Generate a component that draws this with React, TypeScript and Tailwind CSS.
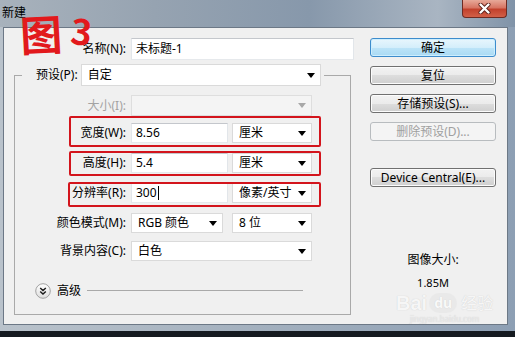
import React from "react";

function Arrow({ disabled }: { disabled?: boolean }) {
  return (
    <svg width="8" height="5" viewBox="0 0 8 5" className="shrink-0">
      <path d="M0 0H8L4 5Z" fill={disabled ? "#a8a8a8" : "#000"} />
    </svg>
  );
}

function Select({ w, h, text, disabled }: { w: string; h: string; text?: string; disabled?: boolean }) {
  return (
    <div
      className={`${w} ${h} ${disabled ? "bg-[#f4f4f4] border-[#dedede]" : "bg-white border-[#dadada]"} border flex items-center justify-between pl-[6px] pr-[5px] shrink-0`}
    >
      <span className="leading-[16px] whitespace-nowrap">{text}</span>
      <Arrow disabled={disabled} />
    </div>
  );
}

function Input({ w, h, children }: { w: string; h: string; children?: React.ReactNode }) {
  return (
    <div className={`${w} ${h} bg-white border border-t-[#c4c7cc] border-x-[#e2e6ea] border-b-[#e6e9ec] flex items-center pl-[4px] shrink-0`}>
      <span className="leading-[16px] whitespace-nowrap flex items-center">{children}</span>
    </div>
  );
}

function Label({ children, disabled }: { children: React.ReactNode; disabled?: boolean }) {
  return (
    <span className={`w-[111px] text-right leading-[16px] whitespace-nowrap shrink-0 ${disabled ? "text-[#a3a3a3]" : "text-black"}`}>
      {children}
    </span>
  );
}

function Btn({ children, kind, className }: { children: React.ReactNode; kind?: "default" | "disabled"; className?: string }) {
  const base = "w-[126px] h-[19px] rounded-[3px] border flex items-center justify-center leading-[16px] whitespace-nowrap";
  if (kind === "default")
    return (
      <div className={`${base} ${className ?? ""} border-[#3d8ccc] bg-[linear-gradient(#e8f6fd,#d4eefb_50%,#bde4f8_50%,#a9daf4)] shadow-[inset_0_0_0_1px_#cdeefe] text-black`}>
        {children}
      </div>
    );
  if (kind === "disabled")
    return (
      <div className={`${base} ${className ?? ""} border-[#b8bcbf] bg-[#f4f4f4] text-[#a0a0a0]`}>{children}</div>
    );
  return (
    <div className={`${base} ${className ?? ""} border-[#707070] bg-[linear-gradient(#f2f2f2,#ebebeb_50%,#dddddd_50%,#cfcfcf)] shadow-[inset_0_0_0_1px_#fcfcfc] text-black`}>
      {children}
    </div>
  );
}

export default function App() {
  return (
    <div className="w-[515px] h-[337px] relative overflow-hidden flex flex-col bg-[linear-gradient(to_right,#b9c2cb,#a3b0be_50%,#8d9fb4)] font-['Noto_Sans','Noto_Sans_CJK_SC',sans-serif] text-[12px] text-black">
      {/* title bar */}
      <div className="h-[27px] shrink-0 flex items-start justify-between bg-[linear-gradient(to_right,#a8b2bc,#96a3b1_30%,#8798ab_60%,#a9b5c2_85%,#8093a8)]">
        <span className="mt-[5px] ml-[2px] leading-[16px] text-black">新建</span>
        <div className="mr-[8px] w-[45px] h-[18px] rounded-b-[4px] border border-t-0 border-[#6e2b22] bg-[linear-gradient(#e7a999,#d77563_45%,#c2412c_55%,#d26048)] flex items-center justify-center">
          <svg width="13" height="11" viewBox="0 0 13 11">
            <path d="M2.5 1.5L10.5 9.5M10.5 1.5L2.5 9.5" stroke="#5a1f18" strokeWidth="4" strokeLinecap="round" />
            <path d="M2.5 1.5L10.5 9.5M10.5 1.5L2.5 9.5" stroke="#fff" strokeWidth="2.4" strokeLinecap="round" />
          </svg>
        </div>
      </div>

      {/* window body */}
      <div className="flex-1 flex pl-[3px] pr-[7px] pb-[6px]">
        <div className="flex-1 border border-[#6c7886] bg-[#f0f0f0] flex">
          {/* left column */}
          <div className="ml-[10px] w-[340px] flex flex-col">
            <div className="mt-[10px] h-[22px] flex items-center">
              <span className="w-[112px] text-right leading-[16px] whitespace-nowrap shrink-0">名称(N):</span>
              <div className="ml-[5px]">
                <Input w="w-[223px]" h="h-[22px]">未标题-1</Input>
              </div>
            </div>

            <fieldset className="mt-[4px] w-[337px] border border-[#a9a9a9] pb-[15px]">
              <legend className="ml-[7px] pl-[14px] pr-[3px]">
                <div className="flex items-center h-[22px]">
                  <span className="leading-[16px] whitespace-nowrap">预设(P):</span>
                  <div className="ml-[3px]">
                    <Select w="w-[240px]" h="h-[22px]" text="自定" />
                  </div>
                </div>
              </legend>

              <div className="mt-[9px] h-[21px] flex items-center">
                <Label disabled>大小(I):</Label>
                <div className="ml-[5px]">
                  <Select w="w-[181px]" h="h-[21px]" disabled />
                </div>
              </div>

              <div className="mt-[7px] h-[20px] flex items-center">
                <Label>宽度(W):</Label>
                <div className="ml-[5px] flex gap-[4px]">
                  <Input w="w-[97px]" h="h-[20px]">8.56</Input>
                  <Select w="w-[80px]" h="h-[20px]" text="厘米" />
                </div>
              </div>

              <div className="mt-[10px] h-[20px] flex items-center">
                <Label>高度(H):</Label>
                <div className="ml-[5px] flex gap-[4px]">
                  <Input w="w-[97px]" h="h-[20px]">5.4</Input>
                  <Select w="w-[80px]" h="h-[20px]" text="厘米" />
                </div>
              </div>

              <div className="mt-[10px] h-[20px] flex items-center">
                <Label>分辨率(R):</Label>
                <div className="ml-[5px] flex gap-[4px]">
                  <Input w="w-[97px]" h="h-[20px]">
                    300<span className="inline-block w-[1px] h-[14px] bg-black ml-[1px]" />
                  </Input>
                  <Select w="w-[80px]" h="h-[20px]" text="像素/英寸" />
                </div>
              </div>

              <div className="mt-[10px] h-[20px] flex items-center">
                <Label>颜色模式(M):</Label>
                <div className="ml-[5px] flex gap-[9px]">
                  <Select w="w-[92px]" h="h-[20px]" text="RGB 颜色" />
                  <Select w="w-[80px]" h="h-[20px]" text="8 位" />
                </div>
              </div>

              <div className="mt-[8px] h-[20px] flex items-center">
                <Label>背景内容(C):</Label>
                <div className="ml-[5px]">
                  <Select w="w-[181px]" h="h-[20px]" text="白色" />
                </div>
              </div>

              <div className="mt-[22px] h-[16px] flex items-center pl-[20px] mr-[47px]">
                <svg width="16" height="16" viewBox="0 0 16 16" className="shrink-0">
                  <defs>
                    <linearGradient id="cg" x1="0" y1="0" x2="0" y2="1">
                      <stop offset="0" stopColor="#ffffff" />
                      <stop offset="1" stopColor="#dedede" />
                    </linearGradient>
                  </defs>
                  <circle cx="8" cy="8" r="7.3" fill="url(#cg)" stroke="#a2a2a2" />
                  <path d="M5.2 5l2.8 2.6L10.8 5M5.2 8.4l2.8 2.6 2.8-2.6" fill="none" stroke="#1a1a1a" strokeWidth="1.4" />
                </svg>
                <span className="ml-[6px] leading-[16px] whitespace-nowrap">高级</span>
                <div className="ml-[6px] flex-1 h-[1px] bg-[#a9a9a9] mt-[-2px]" />
              </div>
            </fieldset>
          </div>

          {/* right column */}
          <div className="ml-[16px] w-[126px] flex flex-col items-center">
            <Btn kind="default" className="mt-[10px]">确定</Btn>
            <Btn className="mt-[9px]">复位</Btn>
            <Btn className="mt-[9px]">存储预设(S)...</Btn>
            <Btn kind="disabled" className="mt-[9px]">删除预设(D)...</Btn>
            <Btn className="mt-[27px]">Device Central(E)...</Btn>
            <span className="mt-[65px] leading-[16px] whitespace-nowrap">图像大小:</span>
            <span className="mt-[7px] leading-[16px] text-[11px] whitespace-nowrap">1.85M</span>
          </div>
        </div>
      </div>
      <div className="h-[6px] shrink-0 bg-[#151a20]" />

      {/* annotations */}
      <div className="absolute left-[69px] top-[116px] w-[252px] h-[31px] border-2 border-[#d3141c] rounded-[2px]" />
      <div className="absolute left-[69px] top-[151px] w-[252px] h-[25px] border-2 border-[#d3141c] rounded-[2px]" />
      <div className="absolute left-[68px] top-[182px] w-[253px] h-[25px] border-2 border-[#d3141c] rounded-[2px]" />

      <div className="absolute left-[20px] top-[8px] flex items-start text-[#e2191c] font-['Noto_Sans_CJK_SC',sans-serif] font-bold">
        <span className="text-[42px] leading-[50px] -rotate-3">图</span>
        <span className="ml-[9px] text-[36px] leading-[42px] rotate-6">3</span>
      </div>

      <div className="absolute left-[396px] top-[292px] flex flex-col items-center text-[#fbfbfb] opacity-60 [text-shadow:0_0_1px_#b0b0b0]">
        <div className="flex items-center leading-[22px]">
          <span className="text-[20px] font-bold font-['Liberation_Sans',sans-serif]">Bai</span>
          <span className="ml-[2px] w-[28px] h-[20px] rounded-full bg-[#e6e6e6] text-white text-[14px] font-bold flex items-center justify-center leading-none">du</span>
          <span className="ml-[4px] text-[16px]">经验</span>
        </div>
        <span className="text-[8px] leading-[10px] text-[#e8e8e8]">jingyan.baidu.com</span>
      </div>
    </div>
  );
}
